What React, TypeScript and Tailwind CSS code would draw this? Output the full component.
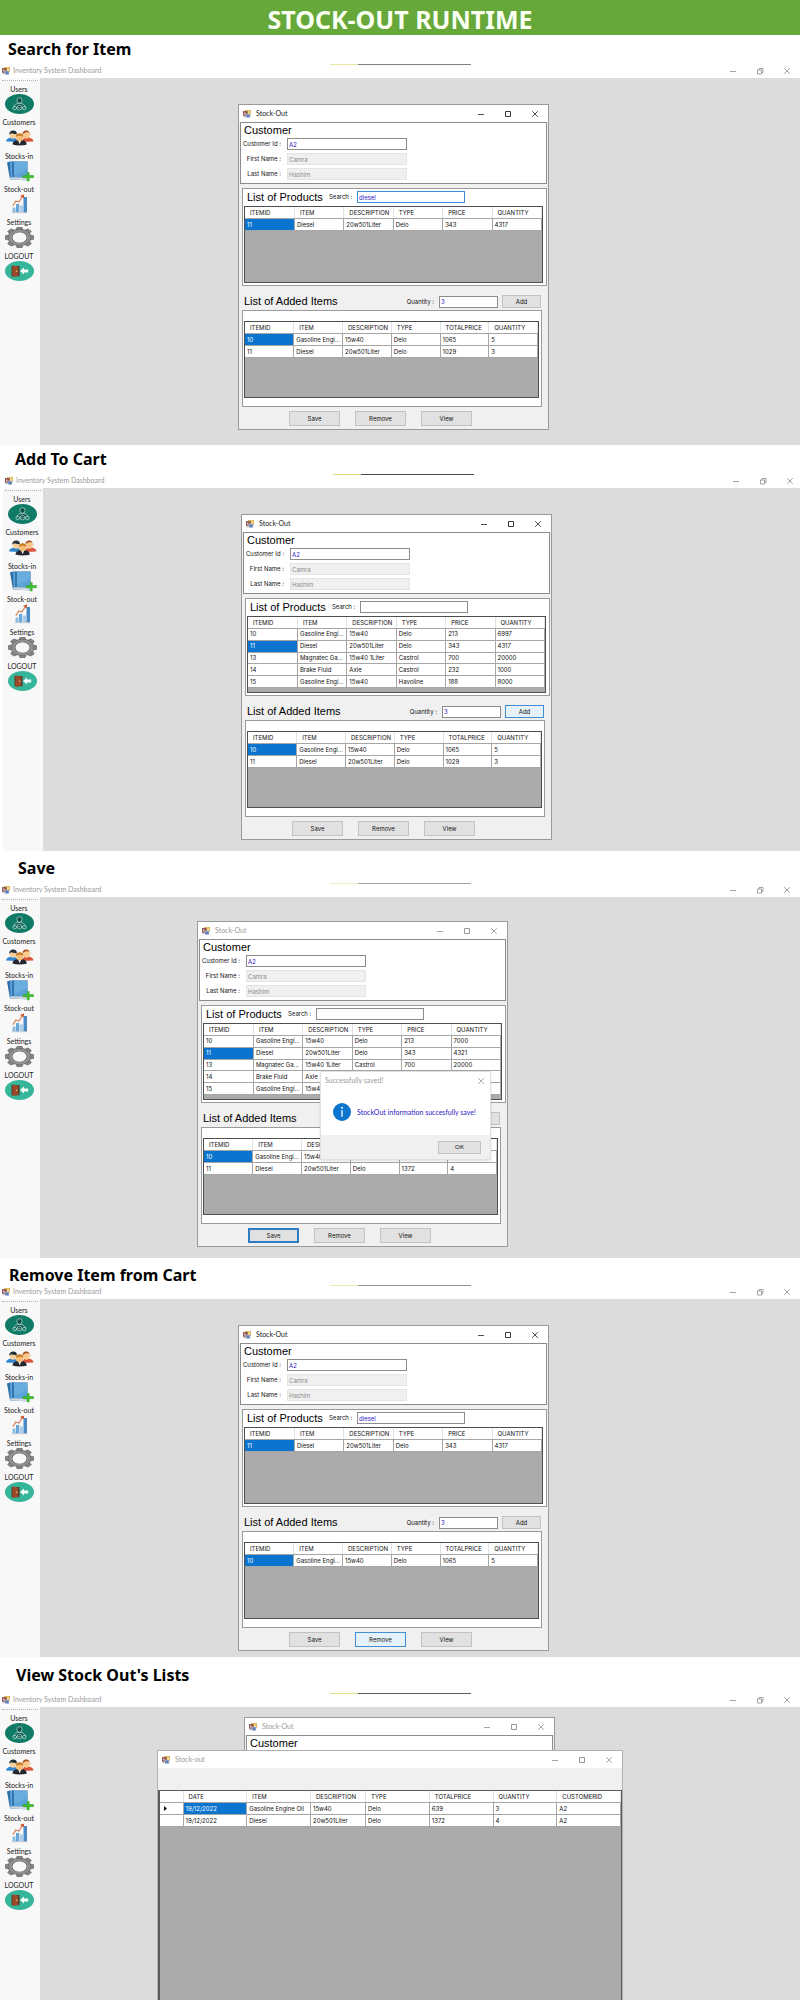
import type { ReactNode } from "react";
import clsx from "clsx";

type Row = string[];

const PRODUCT_COLUMNS = ["ITEMID", "ITEM", "DESCRIPTION", "TYPE", "PRICE", "QUANTITY"];
const CART_COLUMNS = ["ITEMID", "ITEM", "DESCRIPTION", "TYPE", "TOTALPRICE", "QUANTITY"];

const FOUND: Row[] = [["11", "Diesel", "20w501Liter", "Delo", "343", "4317"]];

const PRODUCTS: Row[] = [
  ["10", "Gasoline Engi...", "15w40", "Delo", "213", "6997"],
  ["11", "Diesel", "20w501Liter", "Delo", "343", "4317"],
  ["13", "Magnatec Ga...", "15w40 1Liter", "Castrol", "700", "20000"],
  ["14", "Brake Fluid", "Axle", "Castrol", "232", "1000"],
  ["15", "Gasoline Engi...", "15w40", "Havoline", "188", "8000"],
];

const PRODUCTS_SAVED: Row[] = [
  ["10", "Gasoline Engi...", "15w40", "Delo", "213", "7000"],
  ["11", "Diesel", "20w501Liter", "Delo", "343", "4321"],
  ["13", "Magnatec Ga...", "15w40 1Liter", "Castrol", "700", "20000"],
  ["14", "Brake Fluid", "Axle", "Castrol", "232", "1000"],
  ["15", "Gasoline Engi...", "15w40", "Havoline", "188", "8000"],
];

const CART: Row[] = [
  ["10", "Gasoline Engi...", "15w40", "Delo", "1065", "5"],
  ["11", "Diesel", "20w501Liter", "Delo", "1029", "3"],
];

const CART_SAVED: Row[] = [
  ["10", "Gasoline Engi...", "15w40", "Delo", "1065", "5"],
  ["11", "Diesel", "20w501Liter", "Delo", "1372", "4"],
];

function FormIcon() {
  return (
    <svg className="h-2 w-2 shrink-0" viewBox="0 0 16 16" aria-hidden="true">
      <rect x="5" y="0.5" width="10.5" height="9" fill="#f3d27a" stroke="#c9973a" />
      <rect x="0.5" y="3" width="8" height="8" fill="#8c4b4b" stroke="#6b3a3a" />
      <rect x="2" y="5" width="3" height="4" fill="#e9c9c0" />
      <rect x="6" y="8" width="8" height="7.5" fill="#5f7fb8" stroke="#d9dde6" />
      <rect x="1" y="11.5" width="4" height="3" fill="#b9b9c4" />
    </svg>
  );
}

function WindowControls({ tone, restore }: { tone: string; restore?: boolean }) {
  const cell = "flex h-4 w-[27px] items-center justify-center";
  return (
    <div className={clsx("flex shrink-0 items-center", tone)}>
      <button type="button" aria-label="Minimize" className={cell}>
        <svg className="h-2 w-2" viewBox="0 0 8 8" fill="none" stroke="currentColor">
          <path strokeWidth="0.8" d="M1 4.5h6" />
        </svg>
      </button>
      <button type="button" aria-label={restore ? "Restore" : "Maximize"} className={cell}>
        <svg className="h-2 w-2" viewBox="0 0 8 8" fill="none" stroke="currentColor">
          {restore ? (
            <path strokeWidth="0.8" d="M1.5 3h4v4h-4zM3 3V1.5h4v4H5.5" />
          ) : (
            <path strokeWidth="0.9" d="M1.5 1.5h5v5h-5z" />
          )}
        </svg>
      </button>
      <button type="button" aria-label="Close" className={cell}>
        <svg className="h-2 w-2" viewBox="0 0 8 8" fill="none" stroke="currentColor">
          <path strokeWidth="0.8" d="M1.2 1.2l5.6 5.6M6.8 1.2L1.2 6.8" />
        </svg>
      </button>
    </div>
  );
}

function UsersIcon() {
  return (
    <svg className="h-5 w-[29px]" viewBox="0 0 29 20" aria-hidden="true">
      <ellipse cx="14.5" cy="10" rx="14.5" ry="10" fill="#0f7a66" />
      <g fill="none" stroke="#c3e2db" strokeWidth="0.7">
        <ellipse cx="14.5" cy="6.4" rx="2.6" ry="2.8" fill="#0b4f45" />
        <path d="M9 13.4c0-2.8 2-3.9 5.5-3.9s5.5 1.1 5.5 3.9" fill="#0b5d50" />
        <circle cx="9.7" cy="14" r="1.8" />
        <circle cx="19.3" cy="14" r="1.8" />
        <circle cx="14.5" cy="13.6" r="2.3" fill="#0b4f45" />
        <path d="M11 13.8h1.2M16.8 13.8h1.2M13.3 13.8h2.4" />
      </g>
    </svg>
  );
}

function CustomersIcon() {
  return (
    <svg className="h-5 w-[29px]" viewBox="0 0 29 20" aria-hidden="true">
      <path d="M1 14.5c.5-3 3-4 6-4s5 1 5.500 4.500z" fill="#2f86cf" />
      <path d="M28.500 14.500c-.5-3-3-4-6-4s-5 1-5.500 4.500z" fill="#d9533b" />
      <ellipse cx="8" cy="8" rx="3.3" ry="3.7" fill="#f6cf9a" />
      <path d="M4.300 7.500c-.3-4.500 7.600-5.800 7.700-.3-2.400.3-5-.9-5.600-.9-.6 0-1.100 1.200-2.100 1.200z" fill="#22303a" />
      <ellipse cx="21.5" cy="8" rx="3.3" ry="3.7" fill="#f8c98d" />
      <path d="M17.600 8c-1-6 8-6.500 7.900 1 .6-3.200-1.500-3.700-3-3.700-1.800 0-3.900.5-4.900 2.700z" fill="#a8501c" />
      <path d="M7.500 17.500c.5-3.500 3-4.500 7.200-4.500s6.600 1 7.100 4.500c-4 1.200-10 1.200-14.300 0z" fill="#23262e" />
      <path d="M13 13.200l1.700 4 1.700-4z" fill="#f3f3f3" />
      <ellipse cx="14.7" cy="10.5" rx="3.6" ry="3.7" fill="#f4bd78" />
      <path d="M10.900 10c-.3-5 7.700-5 7.500 0-1.500-1.600-5.700-1.800-7.500 0z" fill="#c77a22" />
    </svg>
  );
}

function StocksInIcon() {
  return (
    <svg className="h-[21px] w-[29px]" viewBox="0 0 29 21" aria-hidden="true">
      <path d="M2 1.500L5 .5h17.500v16l-1.500 2.700L5 18.500z" fill="#2e6ea6" />
      <path d="M5 .8h17.300v15.700L5.500 16.200z" fill="#5ba2d8" />
      <path d="M7 .8h2v15.500H7z" fill="#3576b0" />
      <path d="M9 .8h13.300v7C18 11 13 12.800 9 13.300z" fill="#8cc4ea" opacity="0.3" />
      <path d="M5 18.500l.5-2.300 16.800.3-1.300 2.700z" fill="#cfd8de" />
      <path d="M22.200 11.500h2v3h4.300v2.200h-4.300v3.300h-2v-3.300H18v-2.200h4.200z" fill="#3fc12e" stroke="#2f9a24" strokeWidth="0.5" />
    </svg>
  );
}

function StockOutIcon() {
  return (
    <svg className="h-5 w-[29px]" viewBox="0 0 29 20" aria-hidden="true">
      <path d="M6 19.300h17l-2-1.500H8z" fill="#d2d2d2" />
      <rect x="7.5" y="13.5" width="3" height="4.8" fill="#8dbbe2" />
      <rect x="11" y="10" width="3.2" height="8.3" fill="#6aa7d9" />
      <rect x="14.8" y="11.5" width="3.2" height="6.8" fill="#a9cdea" />
      <rect x="18.5" y="3" width="3.5" height="15.3" fill="#4a8ac5" />
      <path d="M7.800 11.800L10.800 7l3 1L17.600 2.500" fill="none" stroke="#d98058" strokeWidth="1.2" />
      <path d="M15 1.700l4.200-1.300-.6 4.200z" fill="#d0552c" />
    </svg>
  );
}

function SettingsIcon() {
  const teeth = [0, 45, 90, 135, 180, 225, 270, 315];
  return (
    <svg className="h-[21px] w-[29px]" viewBox="-14.5 -10 29 20" preserveAspectRatio="none" aria-hidden="true">
      <g transform="scale(1.45 1)">
        {teeth.map((a) => (
          <path key={a} transform={`rotate(${a})`} d="M-2.300-7.500L-1.600-9.900h3.200L2.300-7.500z" fill="#88888b" stroke="#5f5f62" strokeWidth="0.5" />
        ))}
        <circle r="6.5" fill="none" stroke="#5f5f62" strokeWidth="3.2" />
        <circle r="6.5" fill="none" stroke="#909093" strokeWidth="2.4" />
      </g>
    </svg>
  );
}

function LogoutIcon() {
  return (
    <svg className="h-5 w-[29px]" viewBox="0 0 29 20" aria-hidden="true">
      <ellipse cx="14.5" cy="10" rx="14.5" ry="10" fill="#35b59a" />
      <path d="M6.500 5h8v10.200h-8z" fill="#5d3a26" />
      <path d="M7.500 4.300l5.500 1.400v9.200l-5.500 1z" fill="#9a4a2b" />
      <circle cx="11.7" cy="10.2" r="0.7" fill="#f1d38a" />
      <path d="M15 10l4-3.500v2h4.200v3H19v2z" fill="#f4fffc" />
    </svg>
  );
}

const MENU: { label: string; icon: ReactNode }[] = [
  { label: "Users", icon: <UsersIcon /> },
  { label: "Customers", icon: <CustomersIcon /> },
  { label: "Stocks-in", icon: <StocksInIcon /> },
  { label: "Stock-out", icon: <StockOutIcon /> },
  { label: "Settings", icon: <SettingsIcon /> },
  { label: "LOGOUT", icon: <LogoutIcon /> },
];

function Sidebar() {
  return (
    <nav className="w-10 shrink-0 bg-[#f8f8f8] pt-[2px]" aria-label="Dashboard">
      <div className="mx-[2px] border-t border-dotted border-[#b5b5b5]" />
      <ul className="mt-1 grid h-[200px] grid-rows-6">
        {MENU.map((m) => (
          <li key={m.label}>
            <button type="button" className="flex w-[38px] flex-col items-center">
              <span className="h-[9px] text-[7px] leading-[9px] text-[#222]">{m.label}</span>
              {m.icon}
            </button>
          </li>
        ))}
      </ul>
    </nav>
  );
}

function Scene({
  title,
  headClass,
  lineClass,
  shifted,
  bodyClass,
  children,
}: {
  title: string;
  headClass: string;
  lineClass: string;
  shifted?: boolean;
  bodyClass: string;
  children: ReactNode;
}) {
  return (
    <section className="overflow-hidden bg-white">
      <h2 className={clsx("font-['Noto_Sans',sans-serif] text-base leading-6 font-bold text-black", headClass)}>{title}</h2>
      <div className={clsx(shifted && "-mr-[3px] ml-[3px]")}>
        <header>
          <div className={clsx("ml-[330px] flex h-px w-[141px]", lineClass)}>
            <div className="w-7 bg-[#e3dc7e]" />
            <div className="flex-1 bg-[#4c4c4c]" />
          </div>
          <div className="flex h-[13px] items-center pb-[2px] pl-[2px]">
            <FormIcon />
            <span className="ml-[3px] flex-1 text-[7px] leading-[9px] text-[#9a9a9a]">Inventory System Dashboard</span>
            <WindowControls tone="text-[#8c8c8c]" restore />
          </div>
        </header>
        <div className="flex">
          <Sidebar />
          <div className={clsx("relative min-w-0 flex-1 bg-[#dcdcdc]", bodyClass)}>{children}</div>
        </div>
      </div>
    </section>
  );
}

function Grid({
  label,
  columns,
  rows,
  selected,
  tableClass,
}: {
  label: string;
  columns: string[];
  rows: Row[];
  selected: number;
  tableClass: string;
}) {
  return (
    <div className="h-[77px] overflow-hidden border border-[#4e4e4e] bg-[#ababab]">
      <table aria-label={label} className={clsx("w-full table-fixed border-collapse bg-white text-[6px] leading-[10px] text-[#111]", tableClass)}>
        <thead>
          <tr>
            {columns.map((c) => (
              <th key={c} scope="col" className="border-r border-b border-r-[#e2e2e2] border-b-[#a6a6a6] p-0 pt-px pl-[5px] text-left font-normal whitespace-nowrap">
                {c}
              </th>
            ))}
          </tr>
        </thead>
        <tbody>
          {rows.map((r, i) => (
            <tr key={r[0]}>
              {r.map((v, j) => (
                <td
                  key={j}
                  className={clsx(
                    "overflow-hidden border-r border-b border-[#a6a6a6] p-0 pl-[2px] whitespace-nowrap",
                    i === selected && j === 0 && "bg-[#0a74cf] text-white",
                  )}
                >
                  {v}
                </td>
              ))}
            </tr>
          ))}
        </tbody>
      </table>
    </div>
  );
}

function Field({ id, label, value, disabled }: { id: string; label: string; value: string; disabled?: boolean }) {
  return (
    <div className="flex items-center gap-[6px]">
      <label htmlFor={id} className="w-10 text-right text-[6px] leading-3 whitespace-nowrap text-[#111]">
        {label}
      </label>
      <input
        id={id}
        defaultValue={value}
        disabled={disabled}
        className={clsx(
          "h-3 w-[120px] border px-px text-[6px] leading-[10px]",
          disabled ? "border-[#e4e4e4] bg-[#f0f0f0] text-[#8a8a8a]" : "border-[#8c8c8c] bg-white text-[#2c20c4]",
        )}
      />
    </div>
  );
}

function PushButton({ children, className, state }: { children: ReactNode; className: string; state?: "hover" | "default" }) {
  return (
    <button
      type="button"
      className={clsx(
        "flex items-center justify-center text-[6px] leading-[10px] text-[#111]",
        className,
        state === "hover" && "border border-[#3f8fd6] bg-[#e5f1fb]",
        state === "default" && "border-2 border-[#2f7cc4] bg-[#e1e1e1]",
        !state && "border border-[#c2c2c2] bg-[#e1e1e1]",
      )}
    >
      {children}
    </button>
  );
}

function TitleBar({ title, dim }: { title: string; dim?: boolean }) {
  return (
    <div className="flex h-[17px] items-center bg-white pl-1 font-['Lato',sans-serif]">
      <FormIcon />
      <span className={clsx("ml-[5px] flex-1 text-[7px] leading-[9px]", dim ? "text-[#9a9a9a]" : "text-[#222]")}>{title}</span>
      <WindowControls tone={dim ? "text-[#8f8f8f]" : "text-[#222]"} />
    </div>
  );
}

function SectionTitle({ children, className }: { children: ReactNode; className: string }) {
  return (
    <h3 className={clsx("font-['Liberation_Sans',Arial,sans-serif] text-[11px] leading-[15px] whitespace-nowrap text-black", className)}>
      {children}
    </h3>
  );
}

function WindowFrame({ dim, children }: { dim?: boolean; children: ReactNode }) {
  return (
    <div className="relative w-[311px] border border-[#9a9a9a] bg-[#f0f0f0] font-['Inter',sans-serif]">
      <TitleBar title="Stock-Out" dim={dim} />
      {children}
    </div>
  );
}

function CustomerPanel({ id }: { id: string }) {
  return (
    <div className="mx-px h-[62px] border border-[#8c8c8c] bg-white">
      <SectionTitle className="h-[15px] pl-[3px]">Customer</SectionTitle>
      <div className="flex flex-col gap-[3px]">
        <Field id={`${id}-customer`} label="Customer Id :" value="A2" />
        <Field id={`${id}-first`} label="First Name :" value="Camra" disabled />
        <Field id={`${id}-last`} label="Last Name :" value="Hashim" disabled />
      </div>
    </div>
  );
}

function StockOutWindow({
  id,
  dim,
  search = "",
  searchFocus,
  products,
  productsTable,
  selected,
  cart,
  cartTable,
  active,
  children,
}: {
  id: string;
  dim?: boolean;
  search?: string;
  searchFocus?: boolean;
  products: Row[];
  productsTable: string;
  selected: number;
  cart: Row[];
  cartTable: string;
  active?: "Save" | "Remove" | "Add";
  children?: ReactNode;
}) {
  return (
    <WindowFrame dim={dim}>
      <CustomerPanel id={id} />
      <div className="mt-1 mr-px ml-[3px] h-[98px] border border-[#9a9a9a] bg-white pr-[3px] pl-px">
        <div className="flex h-[17px] items-center pb-px pl-[3px]">
          <SectionTitle className="w-[82px]">List of Products</SectionTitle>
          <label htmlFor={`${id}-search`} className="w-7 text-[6px] leading-3 whitespace-nowrap text-[#111]">
            Search :
          </label>
          <input
            id={`${id}-search`}
            defaultValue={search}
            className={clsx(
              "h-3 w-[108px] border bg-white px-px text-[6px] leading-[10px] text-[#2c20c4]",
              searchFocus ? "border-[#3f8fd6]" : "border-[#8c8c8c]",
            )}
          />
        </div>
        <Grid label="List of Products" columns={PRODUCT_COLUMNS} rows={products} selected={selected} tableClass={productsTable} />
      </div>
      <div className="flex h-6 items-center pt-[9px] pr-[7px] pb-[2px] pl-[5px]">
        <SectionTitle className="flex-1">List of Added Items</SectionTitle>
        <label htmlFor={`${id}-quantity`} className="mr-[5px] text-[6px] leading-3 text-[#111]">
          Quantity :
        </label>
        <input
          id={`${id}-quantity`}
          defaultValue="3"
          className="mr-1 h-3 w-[59px] border border-[#8c8c8c] bg-white px-px text-[6px] leading-[10px] text-[#2c20c4]"
        />
        <PushButton className="h-[13px] w-[39px]" state={active === "Add" ? "hover" : undefined}>
          Add
        </PushButton>
      </div>
      <div className="mr-[6px] ml-[3px] h-[97px] border border-[#9a9a9a] bg-white pt-[10px] pr-[2px] pl-px">
        <Grid label="List of Added Items" columns={CART_COLUMNS} rows={cart} selected={0} tableClass={cartTable} />
      </div>
      <div className="mt-1 mb-[3px] ml-[50px] flex gap-[15px]">
        <PushButton className="h-[15px] w-[51px]" state={active === "Save" ? "default" : undefined}>
          Save
        </PushButton>
        <PushButton className="h-[15px] w-[51px]" state={active === "Remove" ? "hover" : undefined}>
          Remove
        </PushButton>
        <PushButton className="h-[15px] w-[51px]">View</PushButton>
      </div>
      {children}
    </WindowFrame>
  );
}

function SavedDialog() {
  return (
    <div
      role="dialog"
      aria-label="Successfully saved!"
      className="absolute top-[149px] left-[122px] flex h-[89px] w-[171px] flex-col border border-[#e0e0e0] bg-white font-['Lato',sans-serif] shadow-sm"
    >
      <div className="flex h-[17px] items-center justify-between pr-1 pl-1 text-[#9a9a9a]">
        <span className="text-[7px] leading-[9px]">Successfully saved!</span>
        <button type="button" aria-label="Close" className="p-px">
          <svg className="h-2 w-2" viewBox="0 0 8 8" fill="none" stroke="currentColor">
            <path strokeWidth="0.8" d="M1 1l6 6M7 1L1 7" />
          </svg>
        </button>
      </div>
      <div className="flex flex-1 items-center gap-[6px] pl-3">
        <svg className="h-[18px] w-[18px] shrink-0" viewBox="0 0 18 18" aria-hidden="true">
          <circle cx="9" cy="9" r="9" fill="#0a74cf" />
          <circle cx="9" cy="4.8" r="1" fill="#fff" />
          <path d="M9 7.200v6.500" stroke="#fff" strokeWidth="1.3" />
        </svg>
        <p className="text-[7px] leading-[9px] whitespace-nowrap text-[#2c20c4]">StockOut information succesfully save!</p>
      </div>
      <div className="flex h-6 items-center justify-end bg-[#f0f0f0] pr-[9px]">
        <PushButton className="h-[13px] w-[43px]">OK</PushButton>
      </div>
    </div>
  );
}

const HISTORY_COLUMNS = ["DATE", "ITEM", "DESCRIPTION", "TYPE", "TOTALPRICE", "QUANTITY", "CUSTOMERID"];
const HISTORY: Row[] = [
  ["19/12/2022", "Gasoline Engine Oil", "15w40", "Delo", "639", "3", "A2"],
  ["19/12/2022", "Diesel", "20w501Liter", "Delo", "1372", "4", "A2"],
];

function HistoryWindow() {
  return (
    <div className="absolute top-[43px] bottom-0 left-[117px] flex w-[466px] flex-col border border-b-0 border-[#b0b0b0] bg-[#f0f0f0] font-['Inter',sans-serif]">
      <TitleBar title="Stock-out" dim />
      <div className="h-[22px]" />
      <div className="flex-1 border-t border-r border-l-2 border-[#5a5a5a] bg-[#ababab]">
        <table aria-label="Stock-out list" className="h-9 w-full table-fixed border-collapse bg-white text-[6px] leading-[10px] text-[#111]">
          <colgroup>
            <col className="w-[23px]" />
            <col />
            <col />
            <col className="w-[55px]" />
            <col />
            <col />
            <col />
            <col />
          </colgroup>
          <thead>
            <tr>
              <th className="border-r border-b border-r-[#e2e2e2] border-b-[#a6a6a6] p-0" aria-label="Current row" />
              {HISTORY_COLUMNS.map((c) => (
                <th key={c} scope="col" className="border-r border-b border-r-[#e2e2e2] border-b-[#a6a6a6] p-0 pt-px pl-[5px] text-left font-normal whitespace-nowrap">
                  {c}
                </th>
              ))}
            </tr>
          </thead>
          <tbody>
            {HISTORY.map((r, i) => (
              <tr key={i}>
                <td className="border-r border-b border-[#a6a6a6] p-0 pl-1">
                  {i === 0 && (
                    <svg className="h-[5px] w-[3px]" viewBox="0 0 3 5" aria-hidden="true">
                      <path d="M0 0l3 2.500L0 5z" fill="#111" />
                    </svg>
                  )}
                </td>
                {r.map((v, j) => (
                  <td
                    key={j}
                    className={clsx(
                      "border-r border-b border-[#a6a6a6] p-0 pl-[2px] whitespace-nowrap",
                      i === 0 && j === 0 && "bg-[#0a74cf] text-white",
                    )}
                  >
                    {v}
                  </td>
                ))}
              </tr>
            ))}
          </tbody>
        </table>
      </div>
    </div>
  );
}

export default function App() {
  return (
    <main className="w-full bg-white font-['Lato',sans-serif]">
      <div className="mb-px flex h-[35px] items-center justify-center bg-[#66a83a] pt-[3px]">
        <h1 className="font-['Noto_Sans',sans-serif] text-[25px] leading-8 font-bold text-[#fbfff2]">STOCK-OUT RUNTIME</h1>
      </div>

      <Scene title="Search for Item" headClass="h-7 pl-2 pt-px" lineClass="opacity-70" bodyClass="pt-[26px] pb-[15px] pl-[198px]">
        <StockOutWindow id="search" search="diesel" searchFocus products={FOUND} productsTable="h-6" selected={0} cart={CART} cartTable="h-9" />
      </Scene>

      <Scene title="Add To Cart" headClass="h-[29px] pl-[15px] pt-[2px]" lineClass="opacity-100" shifted bodyClass="pt-[26px] pb-[11px] pl-[198px]">
        <StockOutWindow id="add" products={PRODUCTS} productsTable="h-[71px]" selected={1} cart={CART} cartTable="h-9" active="Add" />
      </Scene>

      <Scene title="Save" headClass="h-8 pl-[18px] pt-[5px]" lineClass="opacity-50" bodyClass="pt-6 pb-[11px] pl-[157px]">
        <StockOutWindow id="save" dim products={PRODUCTS_SAVED} productsTable="h-[71px]" selected={1} cart={CART_SAVED} cartTable="h-9" active="Save">
          <SavedDialog />
        </StockOutWindow>
      </Scene>

      <Scene title="Remove Item from Cart" headClass="h-[27px] pl-[9px] pt-[5px]" lineClass="opacity-60" bodyClass="pt-[26px] pb-[6px] pl-[198px]">
        <StockOutWindow id="remove" search="diesel" products={FOUND} productsTable="h-6" selected={0} cart={CART.slice(0, 1)} cartTable="h-6" active="Remove" />
      </Scene>

      <Scene title="View Stock Out's Lists" headClass="h-9 pl-4 pt-[6px]" lineClass="opacity-90" bodyClass="h-[293px] pt-[10px] pl-[204px]">
        <WindowFrame dim>
          <div className="mx-px h-10 border border-[#8c8c8c] bg-white">
            <SectionTitle className="h-4 pl-[3px]">Customer</SectionTitle>
          </div>
        </WindowFrame>
        <HistoryWindow />
      </Scene>
    </main>
  );
}
